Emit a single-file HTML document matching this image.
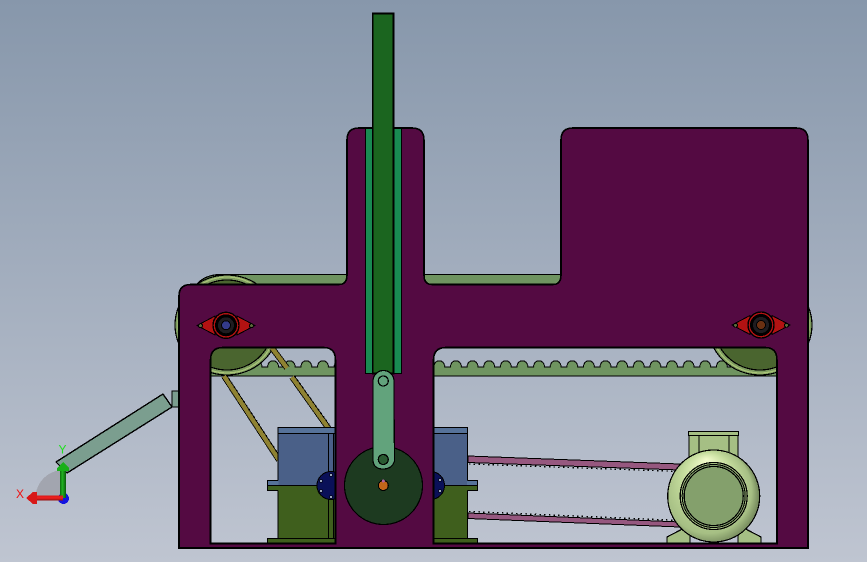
<!DOCTYPE html>
<html>
<head>
<meta charset="utf-8">
<title>Mechanism</title>
<style>
html,body{margin:0;padding:0;width:867px;height:562px;overflow:hidden;background:#a0abbb}
svg{display:block}
</style>
</head>
<body>
<svg width="867" height="562" viewBox="0 0 867 562" xmlns="http://www.w3.org/2000/svg" shape-rendering="crispEdges">
<defs>
<linearGradient id="bg" x1="0" y1="0" x2="0" y2="1">
<stop offset="0" stop-color="#8797ab"/><stop offset="1" stop-color="#bfc5d1"/>
</linearGradient>
<radialGradient id="motor" cx="0.45" cy="0.5" r="0.55" fx="0.42" fy="0.1">
<stop offset="0" stop-color="#f2fbcb"/><stop offset="0.5" stop-color="#c4dc9c"/><stop offset="0.85" stop-color="#a6bf84"/><stop offset="1" stop-color="#6f8358"/>
</radialGradient>
<linearGradient id="gs" x1="0" y1="0" x2="1" y2="0">
<stop offset="0" stop-color="#0c6a0c"/><stop offset="0.4" stop-color="#22b422"/><stop offset="1" stop-color="#0a5a0a"/>
</linearGradient>
<linearGradient id="rs" x1="0" y1="0" x2="0" y2="1">
<stop offset="0" stop-color="#d81818"/><stop offset="0.5" stop-color="#f02020"/><stop offset="1" stop-color="#901010"/>
</linearGradient>
<pattern id="teeth" patternUnits="userSpaceOnUse" x="431" y="355" width="16.62" height="25">
<path d="M0 12 H2.8 C3 8 5.5 5.8 8.3 5.8 C11 5.8 13.6 8 13.8 12 H16.62 V25 H0 Z" fill="#6f9460"/>
<path d="M0 12 H2.8 C3 8 5.5 5.8 8.3 5.8 C11 5.8 13.6 8 13.8 12 H16.62" fill="none" stroke="#000" stroke-width="1"/>
</pattern>
</defs>

<rect width="867" height="562" fill="url(#bg)"/>

<!-- lever -->
<rect x="172" y="391" width="6.5" height="16" fill="#7b9e8f" stroke="#000" stroke-width="1"/>
<path d="M56 462 L163 394 L172 407 L67 473 Z" fill="#7b9e8f" stroke="#000" stroke-width="1.4" stroke-linejoin="round"/>

<!-- top belt -->
<path d="M197 284 Q205 275 220 274.5 H565 V290 H197 Z" fill="#6f9460" stroke="#000" stroke-width="1.2"/>

<!-- lower toothed belt -->
<rect x="205" y="355" width="133" height="21" fill="url(#teeth)"/>
<rect x="431" y="355" width="350" height="21" fill="url(#teeth)"/>
<path d="M205 376 H338 M431 376 H781" stroke="#000" stroke-width="1.2"/>

<!-- pulleys -->
<ellipse cx="227" cy="325" rx="52" ry="50" fill="#7d9c5f" stroke="#000" stroke-width="1.2"/>
<ellipse cx="227" cy="325" rx="49" ry="48" fill="none" stroke="#aac478" stroke-width="1.2"/>
<ellipse cx="227" cy="325" rx="46" ry="45" fill="#4a652f" stroke="#000" stroke-width="1.2"/>
<ellipse cx="760" cy="325" rx="52" ry="50" fill="#7d9c5f" stroke="#000" stroke-width="1.2"/>
<ellipse cx="760" cy="325" rx="49" ry="48" fill="none" stroke="#aac478" stroke-width="1.2"/>
<ellipse cx="760" cy="325" rx="46" ry="45" fill="#4a652f" stroke="#000" stroke-width="1.2"/>

<!-- gold belts -->
<g fill="none" stroke-linecap="butt">
<path d="M224 376 L279 460" stroke="#000" stroke-width="6"/>
<path d="M224 376 L279 460" stroke="#8f8232" stroke-width="4.4"/>
<path d="M226.5 375 L281.5 459" stroke="#000" stroke-width="1.4" stroke-dasharray="1.5 3"/>
<path d="M272 348 L287 368" stroke="#000" stroke-width="6"/>
<path d="M272 348 L287 368" stroke="#8f8232" stroke-width="4.4"/>
<path d="M292 377 L329 429" stroke="#000" stroke-width="6"/>
<path d="M292 377 L329 429" stroke="#8f8232" stroke-width="4.4"/>
<path d="M294.5 376 L331.5 428" stroke="#000" stroke-width="1.4" stroke-dasharray="1.5 3"/>
</g>

<!-- pink belts -->
<path d="M468 456 L680 464 L680 470 L468 462.5 Z" fill="#96587f" stroke="#000" stroke-width="1"/>
<path d="M469 464 L680 471.5" stroke="#000" stroke-width="1.4" stroke-dasharray="1.5 3.2"/>
<path d="M468 513 L680 522 L680 527 L468 518.5 Z" fill="#96587f" stroke="#000" stroke-width="1"/>
<path d="M469 511.5 L680 520.5" stroke="#000" stroke-width="1.4" stroke-dasharray="1.5 3.2"/>

<!-- left gearbox -->
<g stroke="#000" stroke-width="1.2">
<rect x="278" y="427.5" width="60" height="58" fill="#4a6088"/>
<rect x="278" y="427.5" width="60" height="6" fill="#567299"/>
<rect x="267.5" y="480.5" width="11" height="5.5" fill="#567299" stroke="none"/>
<rect x="278" y="485.5" width="60" height="53" fill="#3f5f1d"/>
<rect x="267.5" y="485.5" width="11.5" height="5" fill="#3f5f1d" stroke="none"/>
<path d="M278 480.5 H267.5 V490.5 H278 M267.5 485.5 H338" fill="none"/>
<rect x="267.5" y="538.5" width="70" height="5" fill="#3f5f1d"/>
<path d="M328.5 433 V480 M333.5 433 V480 M328.5 499 V538 M333.5 499 V538" fill="none"/>
</g>
<!-- right gearbox -->
<g stroke="#000" stroke-width="1.2">
<rect x="430" y="427.5" width="37.5" height="58" fill="#4a6088"/>
<rect x="430" y="427.5" width="37.5" height="6" fill="#567299"/>
<rect x="467" y="480.5" width="10.5" height="5.5" fill="#567299" stroke="none"/>
<rect x="430" y="485.5" width="37.5" height="53" fill="#3f5f1d"/>
<rect x="467" y="485.5" width="10.5" height="5" fill="#3f5f1d" stroke="none"/>
<path d="M467.5 480.5 H477.5 V490.5 H467.5 M430 485.5 H477.5" fill="none"/>
<rect x="430" y="538.5" width="47.5" height="5" fill="#3f5f1d"/>
</g>
<!-- navy discs -->
<circle cx="331" cy="485.5" r="14" fill="#0a1058" stroke="#000" stroke-width="1"/>
<circle cx="430.5" cy="485.5" r="14" fill="#0a1058" stroke="#000" stroke-width="1"/>
<g fill="#9aa5b8" stroke="#000" stroke-width="0.6">
<circle cx="331" cy="475" r="1.4"/><circle cx="321" cy="481" r="1.4"/><circle cx="321" cy="491" r="1.4"/><circle cx="331" cy="497" r="1.4"/>
<circle cx="440" cy="480" r="1.4"/><circle cx="440" cy="491" r="1.4"/>
</g>

<!-- motor -->
<rect x="689" y="434" width="49" height="24" fill="#a5bf84" stroke="#000" stroke-width="1.2"/>
<path d="M699 435 V458 M729 435 V458" stroke="#000" stroke-width="1" fill="none"/>
<rect x="688.5" y="431.5" width="50" height="4" fill="#a5bf84" stroke="#000" stroke-width="1.2"/>
<path d="M667 543 V537 L690 525 V543 Z" fill="#a5bf84" stroke="#000" stroke-width="1.2"/>
<path d="M738 543 V525 L761 537 V543 Z" fill="#a5bf84" stroke="#000" stroke-width="1.2"/>
<circle cx="713.7" cy="496" r="46" fill="url(#motor)" stroke="#000" stroke-width="1.2"/>
<circle cx="713.7" cy="496" r="33.5" fill="#a3bd80" stroke="#000" stroke-width="1.2"/>
<circle cx="713.7" cy="496" r="31.5" fill="#84a06c" stroke="#000" stroke-width="1"/>
<circle cx="713.7" cy="496" r="29.5" fill="#84a06c" stroke="#000" stroke-width="1.2"/>

<!-- main plate -->
<path fill="#540a42" stroke="#000" stroke-width="1.6" fill-rule="evenodd" d="
M179 548 V296 Q179 284.5 191 284.5 H339 Q347 284.5 347 275 V140 Q347 128 359 128 H412 Q424 128 424 140 V275 Q424 284.5 432 284.5 H553 Q561 284.5 561 275 V140 Q561 128 573 128 H796 Q808 128 808 140 V548 Z
M210.5 543.5 V360 Q210.5 347.5 223 347.5 H323.5 Q335.5 347.5 335.5 360 V543.5 Z
M433.5 543.5 V360 Q433.5 347.5 446 347.5 H765 Q777 347.5 777 360 V543.5 Z"/>

<!-- slider -->
<rect x="365.5" y="128.5" width="36" height="245" fill="#198a52" stroke="#000" stroke-width="1.4"/>
<rect x="372.7" y="13.5" width="20.8" height="360" fill="#1b651f" stroke="#000" stroke-width="1.6"/>

<!-- big disc -->
<circle cx="383.5" cy="485.5" r="39" fill="#1d3a20" stroke="#000" stroke-width="1.2"/>

<!-- link -->
<path d="M373 381 A10.5 10.5 0 0 1 394 381 L394 400 L394.5 461 Q392 469 383 469 Q374 469 373 461 Z" fill="#62a37c" stroke="#000" stroke-width="1.2"/>
<circle cx="383.3" cy="381" r="5" fill="#62a37c" stroke="#000" stroke-width="1.2"/>
<circle cx="383.3" cy="459.5" r="5" fill="#2a5a32" stroke="#000" stroke-width="1.2"/>
<circle cx="383.3" cy="485.5" r="5" fill="#c2661a" stroke="#000" stroke-width="1"/>
<circle cx="383.3" cy="481" r="1.5" fill="#b060a0"/>

<!-- bearings -->
<g stroke="#000" stroke-width="1" stroke-linejoin="round">
<path d="M197 325.5 L215 316 V335 Z M255 325.5 L237 316 V335 Z" fill="#b31212"/>
<circle cx="226" cy="325.3" r="13" fill="#b31212" stroke-width="1.4"/>
<circle cx="226" cy="325.3" r="10.5" fill="#000"/>
<circle cx="226" cy="325.3" r="8.5" fill="#1e1c20"/>
<circle cx="226" cy="325.3" r="4.5" fill="#333a8a"/>
<circle cx="200.5" cy="325.7" r="2" fill="#5c6a3a"/>
<circle cx="251.5" cy="325.7" r="2" fill="#5c6a3a"/>
<path d="M732 325 L750 315.5 V334.5 Z M790 325 L772 315.5 V334.5 Z" fill="#b31212"/>
<circle cx="761" cy="325" r="13" fill="#b31212" stroke-width="1.4"/>
<circle cx="761" cy="325" r="10.5" fill="#000"/>
<circle cx="761" cy="325" r="8.5" fill="#1e1c20"/>
<circle cx="761" cy="325" r="4.5" fill="#6a3012"/>
<circle cx="735.5" cy="325.3" r="2" fill="#5c6a3a"/>
<circle cx="786.5" cy="325.3" r="2" fill="#5c6a3a"/>
</g>

<!-- triad -->
<path d="M63 498 H35.5 A28 28 0 0 1 63 470 Z" fill="#a2a5af"/>
<circle cx="63.5" cy="498.5" r="5.5" fill="#1414e0"/>
<rect x="60" y="470" width="6" height="28" fill="url(#gs)"/>
<path d="M63 462 L69 468 L69 471 L57 471 L57 468 Z" fill="#18b018"/>
<rect x="36" y="495.5" width="27" height="5" fill="url(#rs)"/>
<path d="M26 498 L33 492 H37 V504 H33 Z" fill="#d81818"/>
<text x="16" y="498" font-family="'Liberation Sans',sans-serif" font-size="12" fill="#f01010">X</text>
<text x="58.5" y="453.5" font-family="'Liberation Sans',sans-serif" font-size="12" fill="#20e020">Y</text>
</svg>
</body>
</html>
